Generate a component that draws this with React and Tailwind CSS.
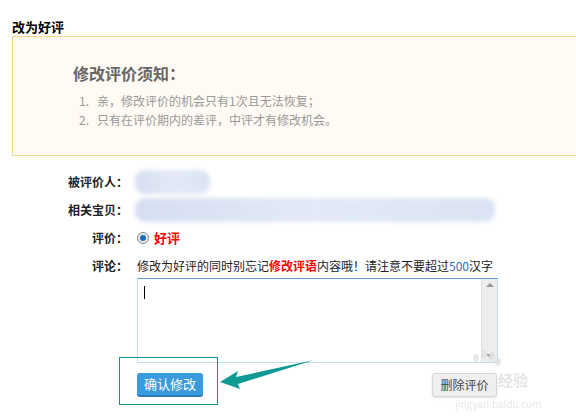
import React from 'react';

const font = { fontFamily: '"Noto Sans CJK SC", "Noto Sans", sans-serif' };

function Label({ children }) {
  return <div className="w-[128px] shrink-0 text-right text-[12px] font-bold text-[#222]">{children}</div>;
}

function Blur({ w }) {
  return (
    <div className={`h-[24px] ${w} rounded-[10px] bg-gradient-to-r from-[#d6def2] via-[#e3e9f6] to-[#dbe3f4] blur-[2px]`} />
  );
}

export default function App() {
  return (
    <div className="relative h-[419px] w-[576px] overflow-hidden bg-white" style={font}>
      <div className="pl-[12px] pt-[18px]">
        <div className="text-[13px] font-bold leading-[18px] text-black">改为好评</div>
        <div className="w-[600px] h-[120px] border border-[#fbd38a] bg-[#fffaf3] pl-[60px] pt-[24px]">
          <div className="text-[16px] font-bold leading-[24px] text-[#666]">修改评价须知：</div>
          <ol className="mt-[6px] pl-[6px] text-[12px] leading-[19px] text-[#999]">
            <li className="flex"><span className="w-[18px]">1.</span>亲，修改评价的机会只有1次且无法恢复；</li>
            <li className="flex"><span className="w-[18px]">2.</span>只有在评价期内的差评，中评才有修改机会。</li>
          </ol>
        </div>
      </div>

      <div className="mt-[12px] flex flex-col">
        <div className="flex h-[28px] items-center">
          <Label>被评价人：</Label>
          <div className="ml-[7px]"><Blur w="w-[75px]" /></div>
        </div>
        <div className="flex h-[28px] items-center">
          <Label>相关宝贝：</Label>
          <div className="ml-[7px]"><Blur w="w-[360px]" /></div>
        </div>
        <div className="flex h-[28px] items-center">
          <Label>评价：</Label>
          <div className="ml-[9px] flex items-center gap-[5px]">
            <span className="flex h-[12px] w-[12px] items-center justify-center rounded-full border border-[#8a8a8a] bg-[#e8e8e8]">
              <span className="h-[6px] w-[6px] rounded-full bg-[#1b6fb8]" />
            </span>
            <span className="text-[13px] font-bold text-[#f00]">好评</span>
          </div>
        </div>
        <div className="flex h-[28px] items-center">
          <Label>评论：</Label>
          <div className="ml-[9px] text-[12px] text-[#222] whitespace-nowrap">
            修改为好评的同时别忘记<span className="font-bold text-[#f00]">修改评语</span>内容哦！请注意不要超过<span className="text-[#2a6fc9]">500</span>汉字
          </div>
        </div>
        <div className="ml-[137px] mt-[-2px] flex h-[85px] w-[361px] border border-[#c5dce9] border-t-[#5b9bd1]">
          <div className="flex-1 pl-[6px] pt-[7px]">
            <div className="h-[13px] w-[1px] bg-black" />
          </div>
          <div className="flex w-[16px] flex-col items-center justify-between border-l border-[#e0e0e0] bg-[#ededed] py-[4px]">
            <span className="h-0 w-0 border-x-[4px] border-b-[4px] border-x-transparent border-b-[#999]" />
            <span className="h-0 w-0 border-x-[4px] border-t-[4px] border-x-transparent border-t-[#999]" />
          </div>
        </div>
        <div className="mt-[10px] flex items-center">
          <button className="ml-[137px] h-[24px] w-[66px] rounded-[3px] border-b-2 border-[#2d7ab4] bg-[#3a9ade] text-[13px] text-white">确认修改</button>
          <button className="ml-[229px] h-[24px] w-[65px] rounded-[3px] border border-[#d6d6d6] bg-[#efefef] text-[12px] text-[#444] shadow-sm">删除评价</button>
        </div>
      </div>

      <div className="absolute left-[119px] top-[357px] h-[48px] w-[99px] border border-[#12968f]" />
      <svg className="absolute left-0 top-0" width="576" height="419">
        <polygon points="220,382 238,371 236,377 314,360 238,384 240,389" fill="#0f9a95" />
        <g fill="#e2e2e2" opacity="0.8">
          <ellipse cx="476" cy="358" rx="3" ry="4" />
          <ellipse cx="484" cy="354" rx="3" ry="4" />
          <ellipse cx="492" cy="356" rx="3" ry="4" />
          <ellipse cx="498" cy="362" rx="3" ry="4" />
        </g>
      </svg>
      <div className="absolute left-[498px] top-[369px] text-[15px] font-bold text-[#d9d9d9] opacity-70">经验</div>
      <div className="absolute left-[455px] top-[398px] text-[10px] leading-[12px] text-[#dcdcdc] opacity-70">jingyan.baidu.com</div>
    </div>
  );
}
